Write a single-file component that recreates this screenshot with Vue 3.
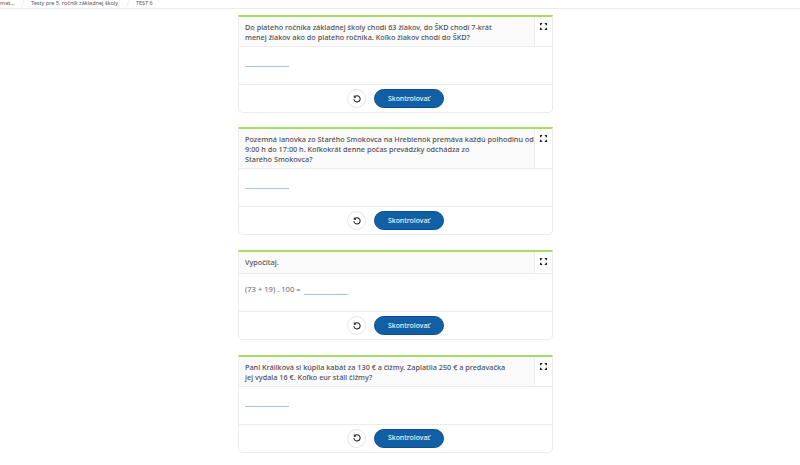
<template>
  <div class="page">
    <nav class="crumbs">
      <span class="crumb first">mat...</span>
      <span class="crumb second">Testy pre 5. ročník základnej školy</span>
      <span class="crumb third">TEST 6</span>
    </nav>
    <main class="list">
      <section v-for="task in tasks" :key="task.id" class="card">
        <header class="card-head">
          <div class="question">
            <div v-for="line in task.lines" :key="line">{{ line }}</div>
          </div>
          <div class="expand">
            <svg width="7" height="7" viewBox="0 0 7 7" fill="none" stroke="#222" stroke-width="1.3">
              <path d="M.6 2.2V.6h1.6M4.8.6h1.6v1.6M6.4 4.8v1.6H4.8M2.2 6.4H.6V4.8" />
            </svg>
          </div>
        </header>
        <div class="card-body" :class="{ inline: task.prefix }">
          <span v-if="task.prefix" class="prefix">{{ task.prefix }}</span>
          <span class="blank"></span>
        </div>
        <footer class="card-foot">
          <button class="reset" type="button">
            <svg width="8" height="8" viewBox="0 0 10 10" fill="none" stroke="#222" stroke-width="1.3">
              <path d="M2.2 2.1A3.9 3.9 0 1 1 1.1 5" />
              <path d="M1.6 .5v2.2h2.2" />
            </svg>
          </button>
          <button class="check" type="button">Skontrolovať</button>
        </footer>
      </section>
    </main>
  </div>
</template>

<script setup>
const tasks = [
  {
    id: 1,
    lines: [
      'Do piateho ročníka základnej školy chodí 63 žiakov, do ŠKD chodí 7-krát',
      'menej žiakov ako do piateho ročníka. Koľko žiakov chodí do ŠKD?'
    ]
  },
  {
    id: 2,
    lines: [
      'Pozemná lanovka zo Starého Smokovca na Hrebienok premáva každú polhodinu od',
      '9:00 h do 17:00 h. Koľkokrát denne počas prevádzky odchádza zo',
      'Starého Smokovca?'
    ]
  },
  {
    id: 3,
    lines: ['Vypočítaj.'],
    prefix: '(73 + 19) . 100 ='
  },
  {
    id: 4,
    lines: [
      'Pani Králiková si kúpila kabát za 130 € a čižmy. Zaplatila 250 € a predavačka',
      'jej vydala 16 €. Koľko eur stáli čižmy?'
    ]
  }
]
</script>

<style>
html,
body {
  margin: 0;
  background: #fff;
}
</style>

<style scoped>
.page {
  width: 800px;
  height: 465px;
  overflow: hidden;
  font-family: "Noto Sans", sans-serif;
  color: #505058;
}

.crumbs {
  height: 8px;
  display: flex;
  border-bottom: 1px solid #ececec;
  font-size: 5.5px;
  line-height: 7px;
  color: #555;
  white-space: nowrap;
}

.crumb {
  position: relative;
  height: 8px;
}

.first {
  width: 31px;
}

.second {
  width: 105px;
}

.first::after,
.second::after {
  content: "";
  position: absolute;
  top: 0;
  right: 8px;
  width: 1px;
  height: 8px;
  background: #efefef;
  transform: skewX(-20deg);
}

.list {
  width: 315px;
  margin: 6px 0 0 238px;
  display: flex;
  flex-direction: column;
  gap: 14.4px;
}

.card {
  border: 1px solid #ececec;
  border-top: 2px solid #a9dc62;
  border-radius: 0 0 5px 5px;
  background: #fff;
}

.card-head {
  display: flex;
  border-bottom: 1px solid #ececec;
}

.question {
  flex: 1;
  min-width: 0;
  min-height: 21.5px;
  box-sizing: border-box;
  padding: 5px 6px 4px;
  background: #fafafa;
  border-right: 1px solid #ececec;
  font-size: 7.28px;
  font-weight: 500;
  line-height: 10px;
  white-space: nowrap;
}

.expand {
  width: 17px;
  flex: none;
  display: flex;
  justify-content: center;
  padding-top: 6px;
  box-sizing: border-box;
}

.expand svg {
  display: block;
}

.card-body {
  height: 38px;
  padding: 0 6px;
  box-sizing: border-box;
  border-bottom: 1px solid #ececec;
}

.blank {
  display: block;
  width: 44px;
  height: 1px;
  padding-top: 18px;
  border-bottom: 1.5px solid #a6c2e2;
}

.card-body.inline {
  display: flex;
  align-items: flex-start;
  gap: 3px;
  padding-top: 10px;
  font-size: 7.6px;
  line-height: 11px;
  color: #666;
}

.inline .blank {
  padding-top: 0;
  height: 10px;
}

.card-foot {
  height: 27px;
  display: flex;
  align-items: center;
  justify-content: center;
  gap: 8px;
}

.reset {
  width: 19px;
  height: 19px;
  padding: 0;
  display: flex;
  align-items: center;
  justify-content: center;
  border: 1px solid #e6e6e6;
  border-radius: 50%;
  background: #fff;
}

.check {
  width: 70px;
  height: 19px;
  padding: 0;
  border: 1px solid #0b4f90;
  border-radius: 10px;
  background: #1160a6;
  color: #eef4fa;
  font-family: inherit;
  font-size: 6.9px;
  font-weight: 500;
  line-height: 16px;
}
</style>
